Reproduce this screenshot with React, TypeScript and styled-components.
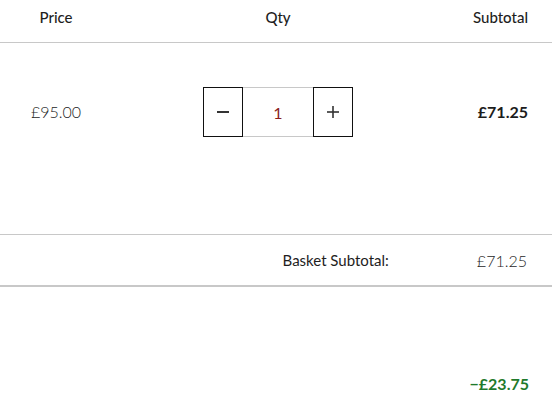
import React from "react";
import styled, { createGlobalStyle } from "styled-components";

const Global = createGlobalStyle`
  html, body { margin: 0; padding: 0; background: #fff; }
  body { font-family: Lato, "Liberation Sans", sans-serif; color: #2b2b2b; }
`;

const Page = styled.div`
  width: 552px;
  display: flex;
  flex-direction: column;
`;

const Grid = styled.div`
  display: grid;
  grid-template-columns: 112px 1fr 108px;
  align-items: center;
`;

const Header = styled(Grid)`
  height: 43px;
  box-sizing: border-box;
  padding-bottom: 9px;
  border-bottom: 1px solid #c8c8c8;
  font-size: 15px;
  font-weight: 500;
  color: #1e1e1e;
`;

const Cell = styled.div<{ $align?: "left" | "center" | "right"; $bold?: boolean; $light?: boolean }>`
  font-weight: ${(p) => (p.$bold ? 700 : p.$light ? 300 : "inherit")};
  padding-right: ${(p) => (p.$align === "right" ? "24px" : "0")};
  display: flex;
  justify-content: ${(p) =>
    p.$align === "right" ? "flex-end" : p.$align === "left" ? "flex-start" : "center"};
`;

const ItemRow = styled(Grid)`
  align-items: start;
  padding-top: 44px;
  height: 192px;
  box-sizing: border-box;
  border-bottom: 1px solid #c8c8c8;
  font-size: 16px;
  color: #1c1c1c;
`;

const RowText = styled(Cell)`
  line-height: 50px;
`;

const Stepper = styled.div`
  display: flex;
  height: 50px;
`;

const StepButton = styled.button`
  width: 40px;
  height: 50px;
  box-sizing: border-box;
  border: 1px solid #111;
  background: #fff;
  padding: 0;
  display: flex;
  align-items: center;
  justify-content: center;
  color: #222;
  cursor: pointer;
`;

const QtyInput = styled.div`
  width: 70px;
  height: 50px;
  box-sizing: border-box;
  border-top: 1px solid #c8c8c8;
  border-bottom: 1px solid #c8c8c8;
  display: flex;
  align-items: center;
  justify-content: center;
  color: #8a1c1c;
  font-size: 16px;
`;

const Summary = styled.div`
  height: 52px;
  box-sizing: border-box;
  border-bottom: 2px solid #c8c8c8;
  display: flex;
  justify-content: flex-end;
  align-items: center;
  gap: 88px;
  padding-right: 25px;
  color: #1e1e1e;
`;

const SummaryLabel = styled.span`
  font-size: 15px;
  font-weight: 400;
`;

const SummaryValue = styled.span`
  font-size: 16px;
  font-weight: 300;
`;

const Discount = styled.div`
  display: flex;
  justify-content: flex-end;
  padding: 87px 23px 0 0;
  font-size: 16px;
  font-weight: 700;
  color: #1f7a2c;
`;

const Minus = () => (
  <svg width="14" height="14" viewBox="0 0 14 14">
    <line x1="1" y1="7" x2="13" y2="7" stroke="#333" strokeWidth="2" />
  </svg>
);
const Plus = () => (
  <svg width="14" height="14" viewBox="0 0 14 14">
    <line x1="1" y1="7" x2="13" y2="7" stroke="#333" strokeWidth="1.6" />
    <line x1="7" y1="1" x2="7" y2="13" stroke="#333" strokeWidth="1.6" />
  </svg>
);

export default function App() {
  return (
    <Page>
      <Global />
      <Header>
        <Cell>Price</Cell>
        <Cell>Qty</Cell>
        <Cell $align="right">Subtotal</Cell>
      </Header>
      <ItemRow>
        <RowText $light>£95.00</RowText>
        <Cell>
          <Stepper>
            <StepButton aria-label="decrease">
              <Minus />
            </StepButton>
            <QtyInput>1</QtyInput>
            <StepButton aria-label="increase">
              <Plus />
            </StepButton>
          </Stepper>
        </Cell>
        <RowText $align="right" $bold>
          £71.25
        </RowText>
      </ItemRow>
      <Summary>
        <SummaryLabel>Basket Subtotal:</SummaryLabel>
        <SummaryValue>£71.25</SummaryValue>
      </Summary>
      <Discount>−£23.75</Discount>
    </Page>
  );
}
